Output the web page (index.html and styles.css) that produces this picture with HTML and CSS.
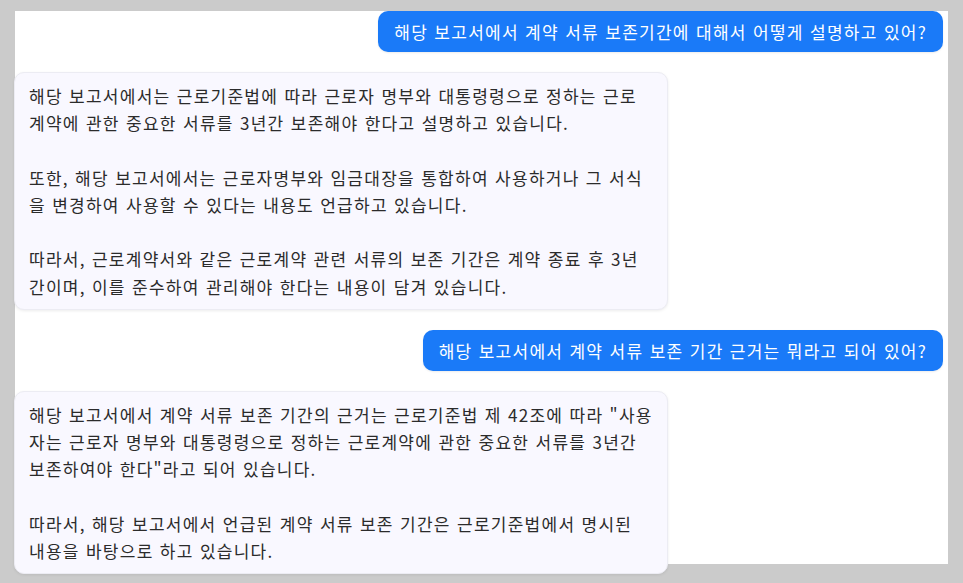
FILE: index.html
```html
<!DOCTYPE html>
<html lang="ko">
<head>
<meta charset="utf-8">
<link rel="stylesheet" href="styles.css">
</head>
<body>
<div class="panel">
  <div class="chat">
    <div class="msg user">해당 보고서에서 계약 서류 보존기간에 대해서 어떻게 설명하고 있어?</div>
    <div class="msg bot">해당 보고서에서는 근로기준법에 따라 근로자 명부와 대통령령으로 정하는 근로계약에 관한 중요한 서류를 3년간 보존해야 한다고 설명하고 있습니다.<br><br>또한, 해당 보고서에서는 근로자명부와 임금대장을 통합하여 사용하거나 그 서식을 변경하여 사용할 수 있다는 내용도 언급하고 있습니다.<br><br>따라서, 근로계약서와 같은 근로계약 관련 서류의 보존 기간은 계약 종료 후 3년간이며, 이를 준수하여 관리해야 한다는 내용이 담겨 있습니다.</div>
    <div class="msg user">해당 보고서에서 계약 서류 보존 기간 근거는 뭐라고 되어 있어?</div>
    <div class="msg bot">해당 보고서에서 계약 서류 보존 기간의 근거는 근로기준법 제 42조에 따라 "사용자는 근로자 명부와 대통령령으로 정하는 근로계약에 관한 중요한 서류를 3년간 보존하여야 한다"라고 되어 있습니다.<br><br>따라서, 해당 보고서에서 언급된 계약 서류 보존 기간은 근로기준법에서 명시된 내용을 바탕으로 하고 있습니다.</div>
  </div>
</div>
</body>
</html>
```
FILE: styles.css
```css
html, body {
  margin: 0;
  padding: 0;
  background: #cbcbcb;
  height: 583px;
  overflow: hidden;
}
body {
  padding: 15px 15px 0 15px;
  box-sizing: border-box;
  font-family: "Noto Sans CJK KR", "Noto Sans", sans-serif;
}
.panel {
  background: #fff;
  height: 553px;
  width: 933px;
}
.chat {
  display: flex;
  flex-direction: column;
  gap: 20px;
  margin: -4px 5px 0 -1px;
}
.msg {
  font-size: 17px;
  line-height: 27.2px;
  letter-spacing: 1.25px;
  word-spacing: 0.3px;
  border-radius: 10px;
  box-sizing: border-box;
}
.user {
  align-self: flex-end;
  background: #1a7af8;
  color: #fff;
  padding: 7px 16px;
  box-shadow: 0 1px 2px rgba(0,0,0,0.08);
}
.bot {
  align-self: flex-start;
  width: 654px;
  background: #f9f8ff;
  color: #2b2b2b;
  border: 1px solid #ececf3;
  padding: 9px 14px;
  box-shadow: 0 1px 3px rgba(0,0,0,0.08);
}
```
